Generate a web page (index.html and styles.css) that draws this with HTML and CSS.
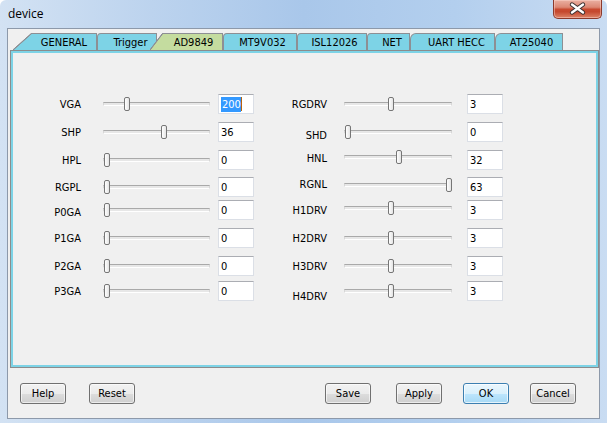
FILE: index.html
```html
<!DOCTYPE html>
<html>
<head>
<meta charset="utf-8">
<title>device</title>
<link rel="stylesheet" href="styles.css">
</head>
<body>
<div class="window">
  <div class="titlebar">
    <span class="title">device</span>
    <div class="close">
      <svg width="49" height="19" viewBox="0 0 49 19">
        <path d="M19 5.5 L30 13.5 M30 5.5 L19 13.5" stroke="#3b3030" stroke-width="4.4" stroke-linecap="round" fill="none"/>
        <path d="M19 5.5 L30 13.5 M30 5.5 L19 13.5" stroke="#ffffff" stroke-width="2.4" stroke-linecap="round" fill="none"/>
      </svg>
    </div>
  </div>
  <div class="client">
    <div class="tabs">
      <div class="tab first w-general">GENERAL</div>
      <div class="tab w-trigger">Trigger</div>
      <div class="tab sel w-ad">AD9849</div>
      <div class="tab w-mt">MT9V032</div>
      <div class="tab w-isl">ISL12026</div>
      <div class="tab w-net">NET</div>
      <div class="tab slant w-uart">UART HECC</div>
      <div class="tab slant w-at">AT25040</div>
    </div>
    <div class="panel">
      <div class="grid">
        <!-- row 1 -->
        <div class="cell lbl">VGA</div>
        <div class="cell sl"><div class="slider"><div class="track"></div><div class="thumb" style="--p:0.1955"></div></div></div>
        <div class="cell"><div class="box"><span class="selected">200</span><span class="caret"></span></div></div>
        <div class="cell lbl">RGDRV</div>
        <div class="cell sl r"><div class="slider"><div class="track"></div><div class="thumb" style="--p:0.4286"></div></div></div>
        <div class="cell"><div class="box">3</div></div>
        <!-- row 2 -->
        <div class="cell lbl">SHP</div>
        <div class="cell sl"><div class="slider"><div class="track"></div><div class="thumb" style="--p:0.5714"></div></div></div>
        <div class="cell"><div class="box">36</div></div>
        <div class="cell lbl dn3">SHD</div>
        <div class="cell sl r"><div class="slider"><div class="track"></div><div class="thumb" style="--p:0"></div></div></div>
        <div class="cell"><div class="box">0</div></div>
        <!-- row 3 -->
        <div class="cell lbl">HPL</div>
        <div class="cell sl"><div class="slider"><div class="track"></div><div class="thumb" style="--p:0"></div></div></div>
        <div class="cell"><div class="box">0</div></div>
        <div class="cell lbl up2">HNL</div>
        <div class="cell sl r up3"><div class="slider"><div class="track"></div><div class="thumb" style="--p:0.508"></div></div></div>
        <div class="cell"><div class="box">32</div></div>
        <!-- row 4 -->
        <div class="cell lbl">RGPL</div>
        <div class="cell sl"><div class="slider"><div class="track"></div><div class="thumb" style="--p:0"></div></div></div>
        <div class="cell"><div class="box">0</div></div>
        <div class="cell lbl up3">RGNL</div>
        <div class="cell sl r up2"><div class="slider"><div class="track"></div><div class="thumb" style="--p:1"></div></div></div>
        <div class="cell"><div class="box">63</div></div>
        <!-- row 5 -->
        <div class="cell lbl dn2">P0GA</div>
        <div class="cell sl"><div class="slider"><div class="track"></div><div class="thumb" style="--p:0"></div></div></div>
        <div class="cell"><div class="box">0</div></div>
        <div class="cell lbl">H1DRV</div>
        <div class="cell sl r up2"><div class="slider"><div class="track"></div><div class="thumb" style="--p:0.4286"></div></div></div>
        <div class="cell"><div class="box">3</div></div>
        <!-- row 6 -->
        <div class="cell lbl">P1GA</div>
        <div class="cell sl"><div class="slider"><div class="track"></div><div class="thumb" style="--p:0"></div></div></div>
        <div class="cell"><div class="box">0</div></div>
        <div class="cell lbl">H2DRV</div>
        <div class="cell sl r"><div class="slider"><div class="track"></div><div class="thumb" style="--p:0.4286"></div></div></div>
        <div class="cell"><div class="box">3</div></div>
        <!-- row 7 -->
        <div class="cell lbl">P2GA</div>
        <div class="cell sl"><div class="slider"><div class="track"></div><div class="thumb" style="--p:0"></div></div></div>
        <div class="cell"><div class="box">0</div></div>
        <div class="cell lbl">H3DRV</div>
        <div class="cell sl r"><div class="slider"><div class="track"></div><div class="thumb" style="--p:0.4286"></div></div></div>
        <div class="cell"><div class="box">3</div></div>
        <!-- row 8 -->
        <div class="cell lbl">P3GA</div>
        <div class="cell sl"><div class="slider"><div class="track"></div><div class="thumb" style="--p:0"></div></div></div>
        <div class="cell"><div class="box">0</div></div>
        <div class="cell lbl dn5">H4DRV</div>
        <div class="cell sl r"><div class="slider"><div class="track"></div><div class="thumb" style="--p:0.4286"></div></div></div>
        <div class="cell"><div class="box">3</div></div>
      </div>
    </div>
    <div class="footer">
      <div class="group left">
        <button class="btn">Help</button>
        <button class="btn">Reset</button>
      </div>
      <div class="group right">
        <button class="btn wide-after">Save</button>
        <button class="btn">Apply</button>
        <button class="btn def">OK</button>
        <button class="btn">Cancel</button>
      </div>
    </div>
  </div>
</div>
</body>
</html>
```

FILE: styles.css
```css
* { box-sizing: border-box; }
html, body { margin: 0; padding: 0; }
body {
  width: 607px;
  height: 423px;
  overflow: hidden;
  background: #ffffff;
  font-family: "DejaVu Sans Condensed", "DejaVu Sans", "Liberation Sans", sans-serif;
  font-size: 11px;
  color: #000;
}

.window {
  width: 607px;
  height: 423px;
  border-radius: 6px 6px 0 0;
  background: linear-gradient(to right, #d3e2f3 0%, #bcd3ee 25%, #a9c7ea 50%, #b3cfee 75%, #c9dcf2 100%);
  display: flex;
  flex-direction: column;
  padding: 0 7px 4px 7px;
}

.titlebar {
  height: 28px;
  display: flex;
  align-items: flex-start;
}
.title {
  font-family: "Open Sans", "Noto Sans", sans-serif;
  font-size: 12px;
  line-height: 16px;
  padding: 6px 0 0 1px;
  color: #000;
}
.close {
  margin-left: auto;
  margin-right: -2px;
  width: 49px;
  height: 19px;
  border: 1px solid #8c3a2c;
  border-top: none;
  border-radius: 0 0 5px 5px;
  background: linear-gradient(#eab0a2 0%, #dc8874 40%, #c84a30 52%, #c5482e 65%, #dc8468 100%);
  box-shadow: inset 0 0 0 1px rgba(255, 220, 210, 0.45);
  overflow: hidden;
}
.close svg { display: block; margin: -1px 0 0 -1px; }

.client {
  flex: 1;
  background: #f0f0f0;
  border: 1px solid #8d99aa;
  display: flex;
  flex-direction: column;
}

.tabs {
  display: flex;
  height: 17px;
  margin-top: 4px;
  padding-left: 24px;
}
.tab {
  position: relative;
  flex: none;
  height: 17px;
  border-top: 1px solid #8d8f94;
  border-right: 1px solid #8d8f94;
  border-left: 1px solid #8d8f94;
  border-top-left-radius: 4px;
  background: #7dd3e6;
  display: flex;
  align-items: center;
  justify-content: center;
  padding-left: 5px;
  white-space: nowrap;
  line-height: 1;
}
.tab.slant { border-top-left-radius: 6px; }
.tab.first {
  border-left: none;
  border-top-left-radius: 0;
  padding-left: 0;
}
.tab.first::before,
.tab.sel::before {
  content: "";
  position: absolute;
  top: -1px;
  height: 17px;
}
.tab.first::before {
  left: -19px;
  width: 19px;
  background: linear-gradient(to bottom right, transparent calc(50% - 0.9px), #8d8f94 calc(50% - 0.3px), #8d8f94 calc(50% + 0.3px), #7dd3e6 calc(50% + 0.9px));
}
.tab.sel {
  background: #c4dc9f;
  border-left: none;
  border-top-left-radius: 0;
  margin-left: 6px;
  padding-left: 2px;
  z-index: 1;
}
.tab.sel::before {
  left: -13px;
  width: 13px;
  background: linear-gradient(to bottom right, transparent calc(50% - 0.9px), #8d8f94 calc(50% - 0.3px), #8d8f94 calc(50% + 0.3px), #c4dc9f calc(50% + 0.9px));
}
.w-general { width: 65px; }
.w-trigger { width: 60px; padding-left: 7px; }
.w-ad { width: 60px; }
.w-mt { width: 74px; }
.w-isl { width: 70px; }
.w-net { width: 43px; padding-left: 7px; }
.w-uart { width: 85px; padding-left: 8px; }
.w-at { width: 68px; }

.panel {
  margin-left: 2px;
  width: 589px;
  height: 318px;
  border: 1px solid #8c8c8c;
  box-shadow: inset 0 0 0 2px #7dd3e6;
  padding: 43px 0 0 2px;
}

.grid {
  display: grid;
  grid-template-columns: 68px 137px 36px 73px 140px 36px;
  grid-template-rows: 28px 28px 27px 23px 28px 28px 25px 20px;
}
.cell {
  height: 20px;
  display: flex;
  align-items: center;
  white-space: nowrap;
}
.lbl { justify-content: flex-end; }
.sl { padding-left: 22px; }
.sl.r { padding-left: 17px; }
.up2 { padding-bottom: 4px; }
.up3 { padding-bottom: 6px; }
.dn2 { padding-top: 4px; }
.dn3 { padding-top: 6px; }
.dn5 { padding-top: 10px; }

.slider {
  position: relative;
  width: 107px;
  height: 14px;
  display: flex;
  align-items: center;
}
.r .slider { width: 108px; }
.track {
  flex: 1;
  height: 4px;
  border: 1px solid #d6d6d6;
  border-top-color: #a9a9a9;
  border-bottom-color: #ffffff;
  background: #e7e7e7;
}
.thumb {
  position: absolute;
  top: 0;
  left: calc(var(--p) * (100% - 7px) + 1px);
  width: 6px;
  height: 14px;
  border: 1px solid #767676;
  border-radius: 2px;
  background: linear-gradient(to right, #ffffff, #e4e4e4);
}

.box {
  width: 36px;
  height: 20px;
  background: #ffffff;
  border: 1px solid #dbdfe6;
  border-top-color: #abadb3;
  padding-left: 2px;
  display: flex;
  align-items: center;
}
.selected {
  background: #3399ff;
  color: #ffffff;
  padding: 1px 0 1px 1px;
}
.caret {
  width: 1px;
  height: 14px;
  background: #b8640c;
}

.footer {
  display: flex;
  padding: 15px 23px 0 12px;
}
.group { display: flex; }
.group.left { gap: 23px; }
.group.right { margin-left: auto; gap: 21px; }
.btn.wide-after { margin-right: 4px; }
.btn {
  width: 46px;
  height: 21px;
  margin: 0;
  padding: 0;
  border: 1px solid #707070;
  border-radius: 3px;
  background: linear-gradient(#f2f2f2 0%, #ebebeb 50%, #dddddd 50%, #cfcfcf 100%);
  box-shadow: inset 0 0 0 1px rgba(255, 255, 255, 0.6);
  font-family: inherit;
  font-size: 11px;
  color: #000;
  display: flex;
  align-items: center;
  justify-content: center;
}
.btn.def {
  border-color: #3c7fb1;
  background: linear-gradient(#eaf6fd 0%, #d9f0fc 50%, #bee6fd 50%, #a7d9f5 100%);
  box-shadow: inset 0 0 0 1px rgba(255, 255, 255, 0.7);
}
```
